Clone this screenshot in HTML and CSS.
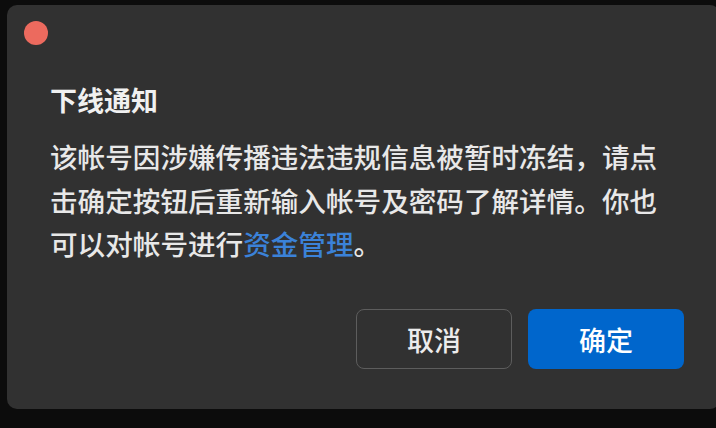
FILE: index.html
```html
<!DOCTYPE html>
<html lang="zh-CN">
<head>
    <meta charset="UTF-8">
    <title>下线通知</title>
    <link rel="stylesheet" href="styles.css">
</head>
<body>
<div class="dialog">
    <span class="dot"></span>
    <h2 class="title">下线通知</h2>
    <p class="msg">该帐号因涉嫌传播违法违规信息被暂时冻结，请点击确定按钮后重新输入帐号及密码了解详情。你也可以对帐号进行<a href="javascript:;">资金管理</a>。</p>
    <div class="btns">
        <button class="btn cancel">取消</button>
        <button class="btn ok">确定</button>
    </div>
</div>
</body>
</html>
```

FILE: styles.css
```css
* {
    margin: 0;
    padding: 0;
    box-sizing: border-box;
}

html, body {
    height: 100%;
    overflow: hidden;
}

body {
    background: #0c0c0c;
    padding: 5px 0 0 7px;
    font-family: "Noto Sans CJK SC", "Noto Sans", sans-serif;
}

.dialog {
    width: 713px;
    height: 404px;
    background: #313131;
    border-radius: 10px;
    padding: 16px 36px 0 17px;
    display: flex;
    flex-direction: column;
}

.dot {
    width: 24px;
    height: 24px;
    border-radius: 50%;
    background: #ec6a5e;
}

.title {
    margin: 36px 0 0 26px;
    font-size: 27px;
    font-weight: 700;
    line-height: 38px;
    color: #f0f0f0;
}

.msg {
    margin: 16px 0 0 26px;
    font-size: 27.6px;
    font-weight: 500;
    line-height: 43.5px;
    color: #e8e8e8;
}

.msg a {
    color: #3b82d8;
    text-decoration: none;
}

.btns {
    display: flex;
    justify-content: flex-end;
    gap: 16px;
    margin-top: auto;
    margin-bottom: 40px;
}

.btn {
    width: 156px;
    height: 60px;
    border-radius: 8px;
    font-family: inherit;
    font-size: 27px;
    font-weight: 500;
    color: #ececec;
    cursor: pointer;
}

.cancel {
    background: transparent;
    border: 1.5px solid #5d5d5d;
}

.ok {
    background: #0066cc;
    border: none;
    color: #fff;
}
```
